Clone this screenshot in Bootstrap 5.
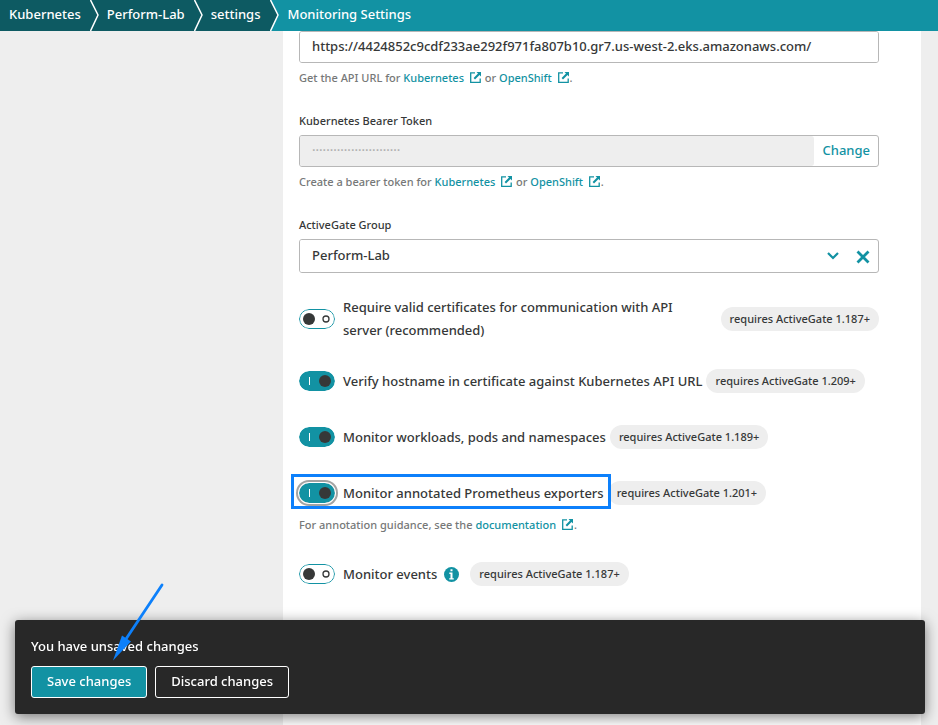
<!DOCTYPE html>
<html lang="en">
<head>
<meta charset="utf-8">
<meta name="viewport" content="width=device-width, initial-scale=1">
<title>Monitoring Settings</title>
<link href="https://cdn.jsdelivr.net/npm/bootstrap@5.3.0/dist/css/bootstrap.min.css" rel="stylesheet">
<style>
:root { --teal: #1292a3; --teal-dark: #0d5a62; --ink: #363838; --soft: #eeeeee; --line: #b7b7b7; }
body { font-family: "Noto Sans", "Open Sans", sans-serif; font-size: 13px; font-weight: 500; line-height: 23px; color: var(--ink); background: var(--soft); }
a { color: var(--teal); text-decoration: none; }
.topbar { background: var(--teal); height: 31px; }
.topbar a, .topbar li { color: #fff; }
.crumb { background: var(--teal-dark); height: 31px; padding-left: 8px; }
.crumb a { padding: 3px 9px 5px 0; }
.crumb:first-child { padding-left: 9px; }
.crumb svg { width: 9px; height: 31px; background: var(--teal-dark); }
.crumb-end a { padding-right: 10px; }
.crumb-end svg { background: var(--teal); }
.crumb-now { padding: 3px 0 5px 8px; }
.page-grid { display: grid; grid-template-columns: 283px 1fr 17px; min-height: calc(100vh - 31px); }
.panel { grid-column: 2; padding: 0 42px 100px 16px; }
.field { height: 32px; border: 1px solid var(--line); border-radius: 3px; background: #fff; overflow: hidden; }
.field-tall { height: 34px; }
.field input, .field select { font-size: 13px; font-weight: 500; color: var(--ink); padding: 0 12px; border: 0; border-radius: 0; min-width: 0; }
.field input:disabled { background: var(--soft); border-radius: 0 3px 3px 0; }
.field input::placeholder { color: #b0b0b0; opacity: 1; }
.field select { background-position: right 9px center; background-size: 12px 8px; background-image: url("data:image/svg+xml,%3Csvg xmlns='http://www.w3.org/2000/svg' viewBox='0 0 12 8'%3E%3Cpath d='M1 1l5 5 5-5' fill='none' stroke='%231292a3' stroke-width='2.2'/%3E%3C/svg%3E"); }
.change-btn { color: var(--teal); font-size: 13px; font-weight: 500; padding: 0 8px 2px; line-height: 28px; }
.clear-btn { width: 32px; padding: 0; line-height: 1; }
.form-name { font-size: 11px; line-height: 16px; margin: 0 0 6px; }
.hint { font-size: 11px; line-height: 16px; color: #767878; margin: 7px 0 27px; }
.hint-option { margin: 12px 0 29px; }
.hint svg { width: 11px; height: 11px; margin: -3px 1px 0 3px; }
.opt { min-height: 24px; margin-bottom: 32px; }
.opt-first { margin: 23px 0 27px; }
.opt-hinted { margin-bottom: 0; }
.opt label { padding-left: 8px; }
.switch { appearance: none; flex: none; width: 36px; height: 20px; margin: 0; border-radius: 10px; background: center / 36px 20px no-repeat url("data:image/svg+xml,%3Csvg xmlns='http://www.w3.org/2000/svg' viewBox='0 0 36 20'%3E%3Crect x='.5' y='.5' width='35' height='19' rx='9.5' fill='%23fff' stroke='%231292a3'/%3E%3Ccircle cx='10' cy='10' r='6' fill='%23363838'/%3E%3Ccircle cx='27' cy='10' r='3' fill='none' stroke='%23363838' stroke-width='1.3'/%3E%3C/svg%3E"); }
.switch:checked { background-image: url("data:image/svg+xml,%3Csvg xmlns='http://www.w3.org/2000/svg' viewBox='0 0 36 20'%3E%3Crect width='36' height='20' rx='10' fill='%231292a3'/%3E%3Cpath d='M10.5 6v8' stroke='%23fff'/%3E%3Ccircle cx='26' cy='10' r='6' fill='%23363838'/%3E%3C/svg%3E"); }
.switch-focused { box-shadow: 0 0 0 1px #fff, 0 0 0 3px #a3a3a3; }
.pill { flex: none; font-size: 11px; line-height: 24px; padding: 0 9px; border-radius: 12px; background: var(--soft); white-space: nowrap; }
.marked-box { inset: -8px -7px -4px -8px; border: 3px solid #0d80fb; z-index: 1; pointer-events: none; }
.info { margin: 0 11px 0 7px; }
.info svg { width: 15px; height: 15px; display: block; }
.save-bar { margin: 0 13px 11px 15px; padding: 15px 16px 16px; background: #282828; border-radius: 3px; box-shadow: 0 3px 14px rgba(0,0,0,.5); }
.save-bar p { line-height: 23px; margin-bottom: 8px; color: #fff; }
.bar-btn { font-size: 13px; font-weight: 500; line-height: 22px; padding: 3px 15px 5px; border: 1px solid #fff; border-radius: 3px; color: #fff; }
.bar-btn.main-btn { background: var(--teal); }
.pointer-arrow { left: 96px; top: -38px; width: 54px; height: 80px; pointer-events: none; }
</style>
</head>
<body>
<svg class="d-none" aria-hidden="true">
  <symbol id="ext" viewBox="0 0 11 11"><path d="M5 .8H.7v9.500h9.500V6.500" fill="none" stroke="#1292a3" stroke-width="1.300"/><path d="M6.500 0H11v4.500L9.500 3.100 5 7.500 3.600 6.100 8 1.600z" fill="#1292a3"/></symbol>
  <symbol id="chev" viewBox="0 0 9 31"><path d="M0 0L8 15 0 31z" fill="#0d5a62"/><path d="M.5 0L8 15 .5 31" fill="none" stroke="#fff" stroke-width="1.500"/></symbol>
</svg>
<header class="topbar sticky-top">
  <nav aria-label="Breadcrumb">
    <ol class="list-unstyled d-flex m-0">
      <li class="crumb d-flex"><a href="#">Kubernetes</a><svg aria-hidden="true"><use href="#chev"/></svg></li>
      <li class="crumb d-flex"><a href="#">Perform-Lab</a><svg aria-hidden="true"><use href="#chev"/></svg></li>
      <li class="crumb crumb-end d-flex"><a href="#">settings</a><svg aria-hidden="true"><use href="#chev"/></svg></li>
      <li class="crumb-now" aria-current="page">Monitoring Settings</li>
    </ol>
  </nav>
</header>
<main class="page-grid">
  <form class="panel bg-white">
    <div class="field d-flex"><input class="form-control shadow-none" type="text" aria-label="Kubernetes API URL" value="https://4424852c9cdf233ae292f971fa807b10.gr7.us-west-2.eks.amazonaws.com/"></div>
    <p class="hint">Get the API URL for <a href="#">Kubernetes <svg aria-hidden="true"><use href="#ext"/></svg></a> or <a href="#">OpenShift <svg aria-hidden="true"><use href="#ext"/></svg></a>.</p>

    <label class="form-name d-block" for="token">Kubernetes Bearer Token</label>
    <div class="field d-flex"><input class="form-control shadow-none" id="token" type="text" placeholder="·························" disabled><button type="button" class="btn change-btn border-0">Change</button></div>
    <p class="hint">Create a bearer token for <a href="#">Kubernetes <svg aria-hidden="true"><use href="#ext"/></svg></a> or <a href="#">OpenShift <svg aria-hidden="true"><use href="#ext"/></svg></a>.</p>

    <label class="form-name d-block" for="group">ActiveGate Group</label>
    <div class="field field-tall d-flex"><select class="form-select shadow-none" id="group"><option>Perform-Lab</option></select><button type="button" class="btn clear-btn border-0" aria-label="Clear"><svg width="14" height="14" viewBox="0 0 14 14" aria-hidden="true"><path d="M1.500 1.500l11 11M12.500 1.500l-11 11" stroke="#1292a3" stroke-width="2.800"/></svg></button></div>

    <div class="opt opt-first d-flex align-items-center"><input class="switch" type="checkbox" role="switch" id="s1"><label class="flex-fill pe-4" for="s1">Require valid certificates for communication with API server (recommended)</label><span class="pill">requires ActiveGate 1.187+</span></div>
    <div class="opt d-flex align-items-center"><input class="switch" type="checkbox" role="switch" id="s2" checked><label class="pe-1" for="s2">Verify hostname in certificate against Kubernetes API URL</label><span class="pill">requires ActiveGate 1.209+</span></div>
    <div class="opt d-flex align-items-center"><input class="switch" type="checkbox" role="switch" id="s3" checked><label class="pe-1" for="s3">Monitor workloads, pods and namespaces</label><span class="pill">requires ActiveGate 1.189+</span></div>
    <div class="opt opt-hinted d-flex align-items-center"><div class="position-relative d-flex align-items-center me-1"><input class="switch switch-focused" type="checkbox" role="switch" id="s4" checked><label for="s4">Monitor annotated Prometheus exporters</label><span class="marked-box position-absolute"></span></div><span class="pill">requires ActiveGate 1.201+</span></div>
    <p class="hint hint-option">For annotation guidance, see the <a href="#">documentation <svg aria-hidden="true"><use href="#ext"/></svg></a>.</p>
    <div class="opt d-flex align-items-center"><input class="switch" type="checkbox" role="switch" id="s5"><label for="s5">Monitor events</label><button type="button" class="btn info border-0 p-0" aria-label="More information"><svg viewBox="0 0 15 15" aria-hidden="true"><circle cx="7.500" cy="7.500" r="7.500" fill="#1292a3"/><path d="M6.500 2.300h2v2h-2zM5.300 5.600h3.200v5.600h1.300v1.300H5.200v-1.300h1.300V6.900H5.300z" fill="#fff"/></svg></button><span class="pill">requires ActiveGate 1.187+</span></div>
  </form>
</main>
<aside class="save-bar fixed-bottom" aria-label="Unsaved changes">
  <p>You have unsaved changes</p>
  <div class="d-flex gap-2"><button type="button" class="btn bar-btn main-btn">Save changes</button><button type="button" class="btn bar-btn">Discard changes</button></div>
  <svg class="pointer-arrow position-absolute" viewBox="0 0 54 80" aria-hidden="true"><path d="M51 3L15 57" stroke="#0d80fb" stroke-width="2.800" stroke-linecap="round"/><path d="M2 78.500L11 53.500l9 6z" fill="#0d80fb"/></svg>
</aside>
<script src="https://cdn.jsdelivr.net/npm/bootstrap@5.3.0/dist/js/bootstrap.bundle.min.js"></script>
</body>
</html>
